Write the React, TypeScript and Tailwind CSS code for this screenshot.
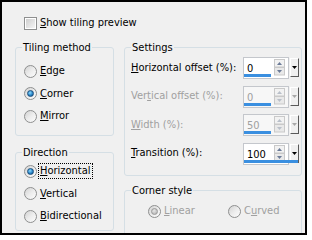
import React from 'react'

type RadioProps = { label: React.ReactNode; checked?: boolean; disabled?: boolean; focused?: boolean }

function Radio({ label, checked, disabled, focused }: RadioProps) {
  return (
    <div className="flex items-center h-[22.5px]">
      <span className="w-[13px] h-[13px] rounded-full border border-[#8e8f8f] bg-gradient-to-br from-[#d2d2d2] via-[#ececec] to-[#fdfdfd] flex items-center justify-center shrink-0">
        {checked && (
          <span
            className={`w-[7px] h-[7px] rounded-full ${
              disabled
                ? 'bg-[radial-gradient(circle_at_40%_35%,#e8e8e8,#a9a9a9)] border border-[#9a9a9a]'
                : 'bg-[radial-gradient(circle_at_40%_35%,#8fdcff,#2a86c9_55%,#104f86)] border border-[#1d4f7c]'
            }`}
          />
        )}
      </span>
      <span
        className={`ml-[2px] px-[1px] leading-[14px] ${disabled ? 'text-[#a0a0a0]' : 'text-black'} ${
          focused ? 'outline outline-1 outline-dotted outline-black' : ''
        }`}
      >
        {label}
      </span>
    </div>
  )
}

function Spin({ value, pct, disabled }: { value: string; pct: number; disabled?: boolean }) {
  const tri = disabled ? '#a8a8a8' : '#000'
  return (
    <div className="relative flex items-start h-[22px] w-[56px] mr-[2px] shrink-0">
      <div className={`w-[47px] h-[22px] border border-[#c4c7cc] ${disabled ? 'bg-[#f7f7f7]' : 'bg-white'} flex`}>
        <span className={`pl-[3px] pt-[5px] leading-[12px] flex-1 ${disabled ? 'text-[#a0a0a0]' : 'text-black'}`}>{value}</span>
        <svg width="11" height="17" viewBox="0 0 11 17" className="mt-[1px] mr-[3px]">
          <rect x="0.5" y="0.5" width="10" height="7.5" fill="#f2f2f2" stroke="#c9c9c9" />
          <rect x="0.5" y="8.5" width="10" height="7.5" fill="#e9e9e9" stroke="#c9c9c9" />
          <path d="M3 6 L5.5 3 L8 6 Z" fill={disabled ? '#b9bfc9' : '#6b7b97'} />
          <path d="M3 11 L5.5 14 L8 11 Z" fill={disabled ? '#b9bfc9' : '#6b7b97'} />
        </svg>
      </div>
      <div className="ml-[1px] mt-[1px] w-[9px] h-[19px] bg-[#f0f0f0] border-t border-l border-t-white border-l-white border-r border-b border-r-[#5a5a5a] border-b-[#5a5a5a] flex items-center justify-center">
        <svg width="5" height="3" viewBox="0 0 5 3">
          <path d="M0 0 L5 0 L2.5 3 Z" fill={tri} />
        </svg>
      </div>
      {/* value bar */}
      <div className="absolute left-[1px] bottom-[2px] h-[3px] bg-[#3a8fe0]" style={{ width: `${pct * 0.54}px` }} />
    </div>
  )
}

function SpinRow({ label, value, pct, disabled }: { label: React.ReactNode; value: string; pct: number; disabled?: boolean }) {
  return (
    <div className="flex items-center h-[22px]">
      <span className={`flex-1 ml-[6px] ${disabled ? 'text-[#a0a0a0]' : 'text-black'}`}>{label}</span>
      <Spin value={value} pct={pct} disabled={disabled} />
    </div>
  )
}

const legend = 'ml-[6px] px-[1px] leading-[13px] text-black'
const box = 'border border-[#d5dfe5] rounded-[3px] p-0 m-0 min-w-0'

export default function App() {
  return (
    <div className="w-[312px] h-[240px] bg-white font-['DejaVu_Sans',sans-serif] font-stretch-condensed text-[11px]">
      <div className="w-[307px] h-[235px] border-2 border-black bg-[#f0f0f0] overflow-hidden">
        <div className="flex items-center h-[16px] mt-[13px] ml-[22px]">
          <span className="w-[13px] h-[13px] border border-[#8e8f8f] bg-white p-px shrink-0">
            <span className="block w-full h-full bg-gradient-to-br from-[#cfcfcf] to-[#f5f5f5]" />
          </span>
          <span className="ml-[3px]">
            <u>S</u>how tiling preview
          </span>
        </div>

        <div className="flex mt-[10px] ml-[13px] gap-[10px]">
          {/* left column */}
          <div className="w-[99px] flex flex-col">
            <fieldset className={`${box} h-[95px]`}>
              <legend className={legend}>Tiling method</legend>
              <div className="ml-[8px] mt-[6px] flex flex-col">
                <Radio label={<><u>E</u>dge</>} />
                <Radio label={<><u>C</u>orner</>} checked />
                <Radio label={<><u>M</u>irror</>} />
              </div>
            </fieldset>
            <fieldset className={`${box} h-[85px] mt-[10px]`}>
              <legend className={legend}>Direction</legend>
              <div className="ml-[8px] mt-[1px] flex flex-col">
                <Radio label={<><u>H</u>orizontal</>} checked focused />
                <Radio label={<><u>V</u>ertical</>} />
                <Radio label={<><u>B</u>idirectional</>} />
              </div>
            </fieldset>
          </div>

          {/* right column */}
          <div className="w-[178px] flex flex-col">
            <fieldset className={`${box} h-[135px]`}>
              <legend className={legend}>Settings</legend>
              <div className="mt-[3px] flex flex-col gap-[6.5px]">
                <SpinRow label={<><u>H</u>orizontal offset (%):</>} value="0" pct={50} />
                <SpinRow label={<>Ver<u>t</u>ical offset (%):</>} value="0" pct={50} disabled />
                <SpinRow label={<><u>W</u>idth (%):</>} value="50" pct={50} disabled />
                <SpinRow label={<><u>T</u>ransition (%):</>} value="100" pct={100} />
              </div>
            </fieldset>
            <fieldset className={`${box} h-[60px] mt-[8px]`}>
              <legend className={legend}>Corner style</legend>
              <div className="flex mt-[3px]">
                <div className="ml-[23px] w-[80px]">
                  <Radio label={<><u>L</u>inear</>} checked disabled />
                </div>
                <Radio label={<>C<u>u</u>rved</>} disabled />
              </div>
            </fieldset>
          </div>
        </div>
      </div>
    </div>
  )
}
